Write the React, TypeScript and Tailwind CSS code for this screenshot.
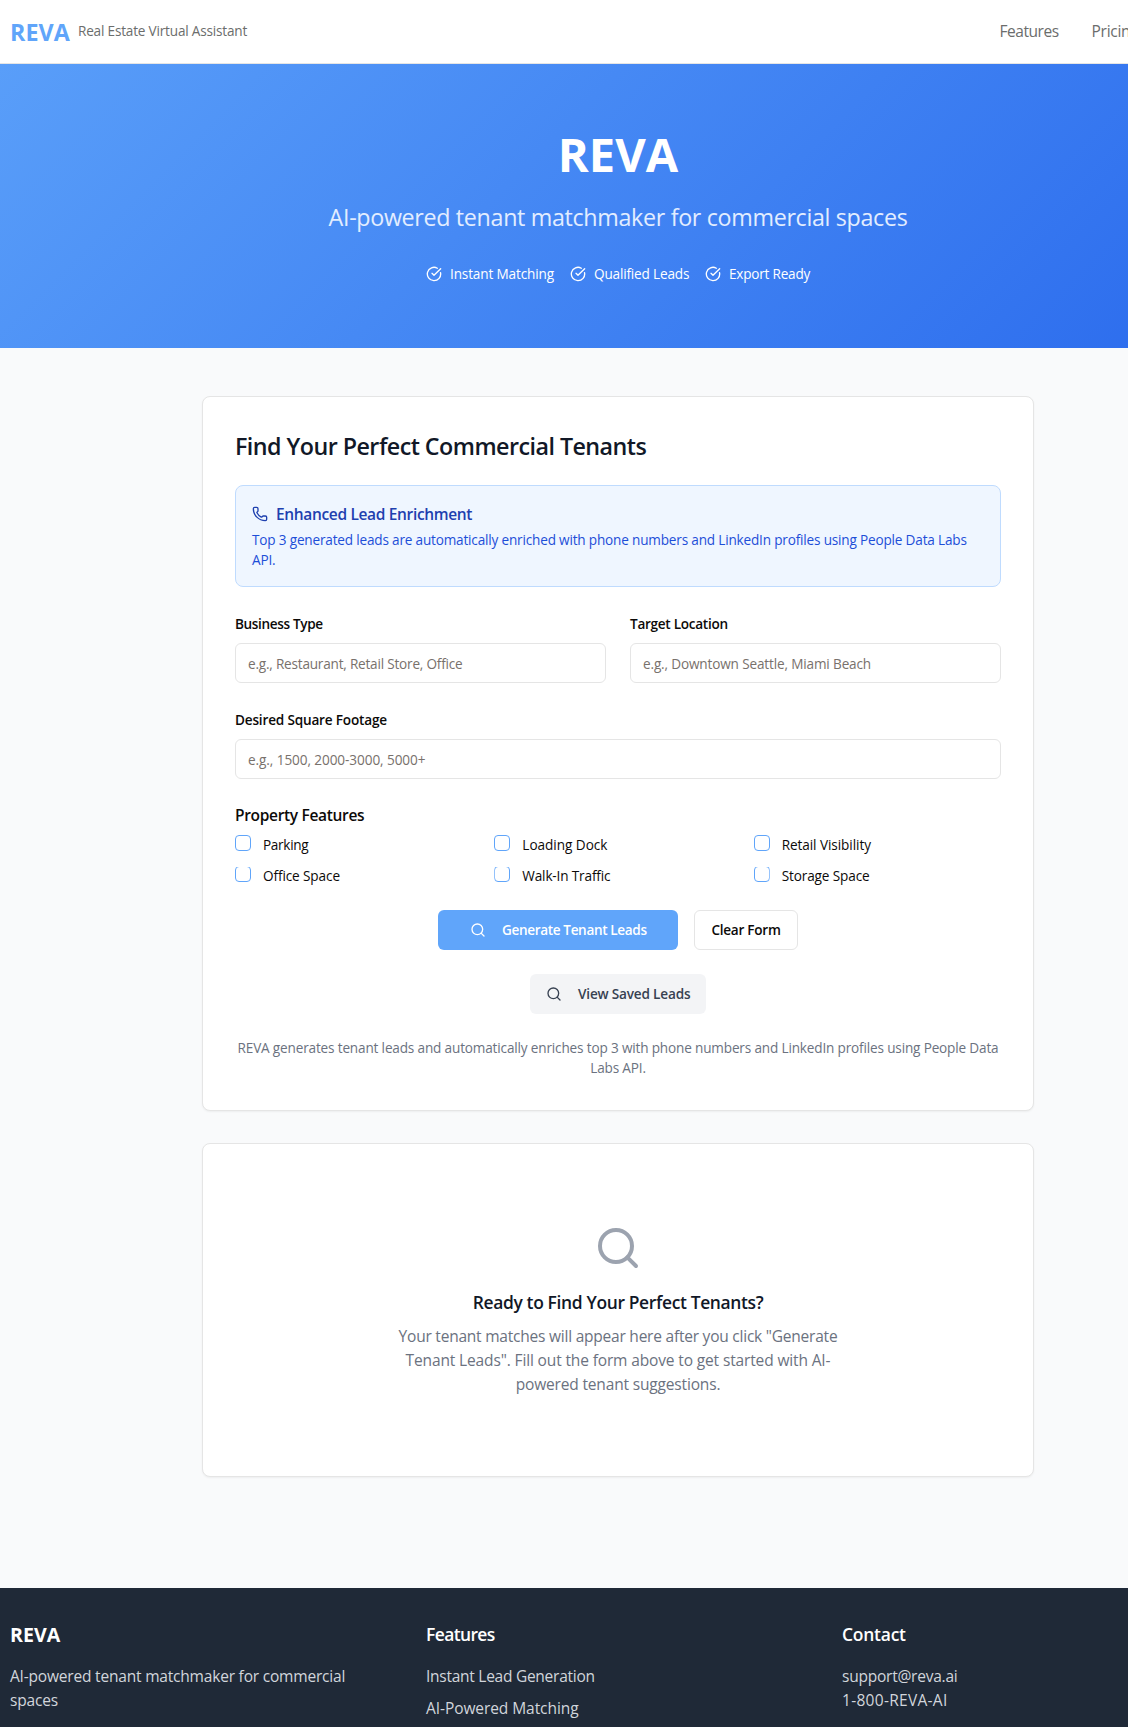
import React from "react";
import { CircleCheckBig, Phone, Search } from "lucide-react";

const highlights = [
  { label: "Instant Matching", className: "w-[104px] tracking-[-0.143px]" },
  { label: "Qualified Leads", className: "w-[95px] tracking-[-0.17px]" },
  { label: "Export Ready", className: "w-[81px] tracking-[-0.22px]" },
];

const features = [
  { label: "Parking", tracking: "tracking-[-0.3px]" },
  { label: "Loading Dock", tracking: "tracking-[-0.03px]" },
  { label: "Retail Visibility", tracking: "tracking-[-0.07px]" },
  { label: "Office Space", tracking: "tracking-[-0.107px]" },
  { label: "Walk-In Traffic", tracking: "tracking-[-0.15px]" },
  { label: "Storage Space", tracking: "tracking-[-0.12px]" },
];

function Header() {
  return (
    <header className="flex h-16 items-center border-b border-[#e5e5e5] bg-white px-[10px] pb-0.5">
      <span className="translate-y-px text-[23.28px] leading-8 font-bold tracking-[0.1px] text-[#60a5fa]">REVA</span>
      <span className="ml-2 text-[13.58px] leading-5 tracking-[-0.188px] whitespace-nowrap text-[#6b6d6c]">
        Real Estate Virtual Assistant
      </span>
      <nav className="ml-auto flex w-[226.5px] gap-[33px] text-[15.52px] leading-6 text-[#6b6d6c]">
        <a className="tracking-[-0.47px]">Features</a>
        <a className="tracking-[-0.3px]">Pricing</a>
      </nav>
    </header>
  );
}

function Hero() {
  return (
    <section className="flex h-[284px] flex-col items-center bg-[linear-gradient(135deg,#599ef9_0%,#2b6bed_100%)] pt-16 text-white">
      <h1 className="translate-y-0.5 text-[47px] leading-[48px] font-bold tracking-[0.1px]">REVA</h1>
      <p className="mt-6 translate-y-px text-[23.28px] leading-8 tracking-[-0.325px] text-[#e2edff]">
        AI-powered tenant matchmaker for commercial spaces
      </p>
      <div className="mt-8 flex gap-4 text-[13.58px] leading-5">
        {highlights.map((h) => (
          <div key={h.label} className="flex items-center gap-2">
            <CircleCheckBig size={16} />
            <span className={"whitespace-nowrap " + h.className}>{h.label}</span>
          </div>
        ))}
      </div>
    </section>
  );
}

function Field({ label, placeholder, labelTracking, inputTracking }: { label: string; placeholder: string; labelTracking: string; inputTracking: string }) {
  return (
    <div>
      <label className={"block pt-[3px] pb-px text-[13.58px] leading-5 font-semibold text-[#0c0a09] " + labelTracking}>{label}</label>
      <input
        placeholder={placeholder}
        className={
          "mt-2 block h-10 w-full rounded-md border border-[#e5e5e5] bg-white px-3 text-[13.58px] leading-5 outline-none placeholder:text-[#78716c] " +
          inputTracking
        }
      />
    </div>
  );
}

function LeadForm() {
  return (
    <section className="h-[715px] rounded-lg border border-[#e5e5e5] bg-white p-8 shadow-[0_1px_2px_0_rgba(0,0,0,0.05)]">
      <h2 className="translate-y-px text-[23.28px] leading-8 font-semibold tracking-[-0.53px] text-[#111827]">
        Find Your Perfect Commercial Tenants
      </h2>

      <div className="mt-6 h-[102px] rounded-lg border border-[#bfdbfe] bg-[#eff6ff] p-4">
        <div className="flex items-center gap-2 text-[#1e40af]">
          <Phone size={16} />
          <span className="text-[15.52px] leading-6 font-semibold tracking-[-0.349px]">Enhanced Lead Enrichment</span>
        </div>
        <p className="mt-1 text-[13.58px] leading-5 tracking-[-0.181px] text-[#1d4ed8]">
          Top 3 generated leads are automatically enriched with phone numbers and LinkedIn profiles using People Data Labs API.
        </p>
      </div>

      <form className="mt-6" onSubmit={(e) => e.preventDefault()}>
        <div className="grid grid-cols-2 gap-6">
          <Field label="Business Type" placeholder="e.g., Restaurant, Retail Store, Office" labelTracking="tracking-[-0.355px]" inputTracking="tracking-[-0.209px]" />
          <Field label="Target Location" placeholder="e.g., Downtown Seattle, Miami Beach" labelTracking="tracking-[-0.284px]" inputTracking="tracking-[-0.15px]" />
        </div>
        <div className="mt-6">
          <Field label="Desired Square Footage" placeholder="e.g., 1500, 2000-3000, 5000+" labelTracking="tracking-[-0.178px]" inputTracking="tracking-[-0.08px]" />
        </div>

        <div className="mt-6 text-[15.52px] leading-6 font-semibold tracking-[-0.332px] text-[#0c0a09]">Property Features</div>
        <div className="mt-2 grid grid-cols-3 gap-3">
          {features.map((f, i) => (
            <label key={f.label} className="flex h-[19px] items-start gap-3 text-[13.58px] leading-5 text-[#0c0a09]">
              <span
                className={
                  "size-4 shrink-0 rounded-[4px] border border-[#60a5fa] " + (i > 2 ? "[clip-path:inset(1px_0_0_0)]" : "")
                }
              />
              <span className={f.tracking}>{f.label}</span>
            </label>
          ))}
        </div>

        <div className="mt-[25px] flex justify-center gap-4 text-[13.58px] leading-5 font-semibold">
          <button className="flex h-10 w-[240px] items-center rounded-md bg-[#60a5fa] pl-8 text-white">
            <Search size={16} />
            <span className="ml-4 tracking-[-0.36px]">Generate Tenant Leads</span>
          </button>
          <button className="h-10 w-[104px] rounded-md border border-[#e5e5e5] bg-white tracking-[-0.262px] text-[#0c0a09]">Clear Form</button>
        </div>
        <div className="mt-6 flex justify-center">
          <button className="flex h-10 w-[176px] items-center rounded-md bg-[#f3f4f6] pl-4 text-[13.58px] leading-5 font-semibold text-[#374151]">
            <Search size={16} />
            <span className="ml-4 tracking-[-0.18px]">View Saved Leads</span>
          </button>
        </div>
      </form>

      <p className="mt-6 text-center text-[13.58px] leading-5 tracking-[-0.163px] text-[#6b7280]">
        REVA generates tenant leads and automatically enriches top 3 with phone numbers and LinkedIn profiles using People Data
        <br />
        Labs API.
      </p>
    </section>
  );
}

function EmptyState() {
  return (
    <section className="mt-8 flex h-[334px] flex-col items-center rounded-lg border border-[#e5e5e5] bg-white pt-20 text-center shadow-[0_1px_2px_0_rgba(0,0,0,0.05)]">
      <Search size={48} className="text-[#9ca3af]" />
      <h3 className="mt-4 text-[17.46px] leading-7 font-semibold tracking-[-0.355px] text-[#111827]">Ready to Find Your Perfect Tenants?</h3>
      <p className="mt-2 text-[15.52px] leading-6 whitespace-nowrap text-[#6b7280]">
        <span className="tracking-[-0.229px]">Your tenant matches will appear here after you click "Generate</span>
        <br />
        <span className="tracking-[-0.143px]">Tenant Leads". Fill out the form above to get started with AI-</span>
        <br />
        <span className="tracking-[-0.167px]">powered tenant suggestions.</span>
      </p>
    </section>
  );
}

function Footer() {
  return (
    <footer className="mt-[111px] grid h-[280px] grid-cols-3 gap-8 bg-[#1f2937] px-[10px] pt-8 text-[15.52px] leading-6 text-[#d1d5db]">
      <div>
        <h3 className="mb-4 translate-y-px text-[19.6px] leading-7 font-bold text-white">REVA</h3>
        <p className="tracking-[-0.2px]">
          AI-powered tenant matchmaker for commercial
          <br />
          spaces
        </p>
      </div>
      <div>
        <h4 className="mb-4 text-[17.46px] leading-7 font-semibold tracking-[-0.6px] text-white">Features</h4>
        <ul className="space-y-2">
          <li className="tracking-[-0.27px]">Instant Lead Generation</li>
          <li className="tracking-[-0.08px]">AI-Powered Matching</li>
        </ul>
      </div>
      <div>
        <h4 className="mb-4 text-[17.46px] leading-7 font-semibold tracking-[-0.23px] text-white">Contact</h4>
        <p className="tracking-[-0.238px]">support@reva.ai</p>
        <p className="tracking-[0.28px]">1-800-REVA-AI</p>
      </div>
    </footer>
  );
}

export default function App() {
  return (
    <div className="h-[1727px] w-full overflow-hidden bg-[#f9fafb] font-['Open_Sans','Noto_Sans',sans-serif]">
      <div className="w-[1236px]">
        <Header />
        <Hero />
        <main className="mx-auto mt-12 w-[832px]">
          <LeadForm />
          <EmptyState />
        </main>
        <Footer />
      </div>
    </div>
  );
}
